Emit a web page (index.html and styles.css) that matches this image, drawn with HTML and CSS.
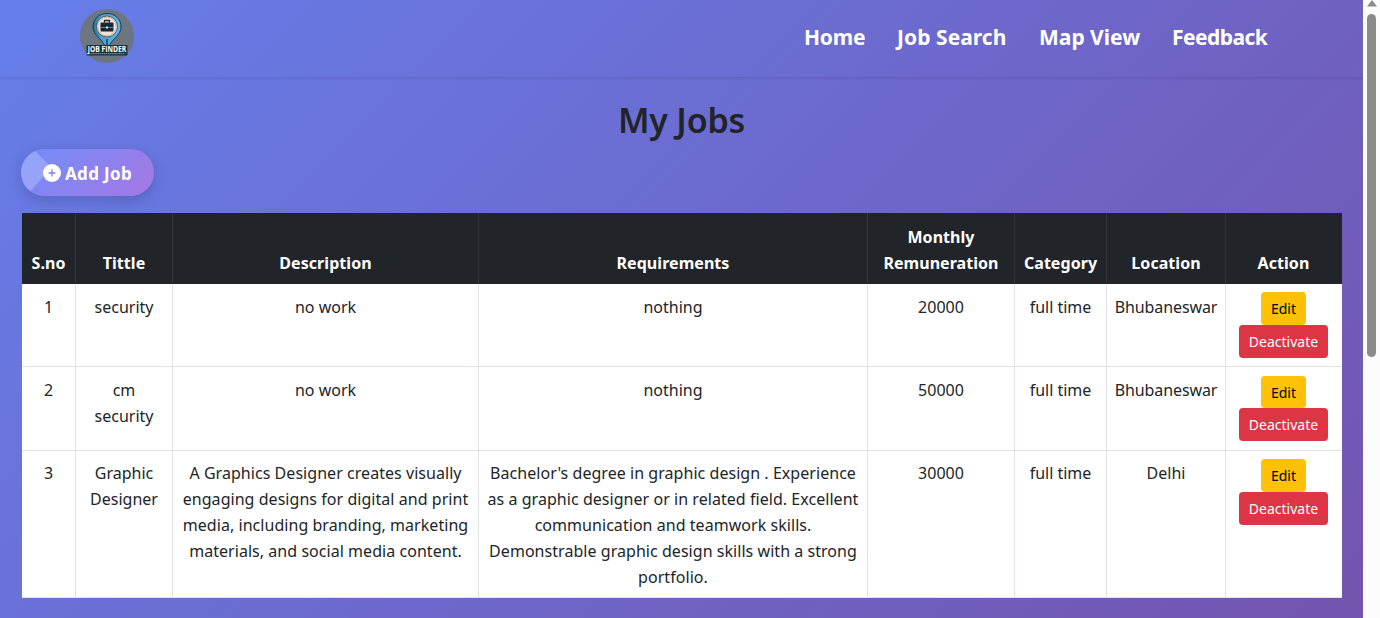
FILE: index.html
```html
<!DOCTYPE html>
<html lang="en">
<head>
<meta charset="utf-8">
<title>My Jobs</title>
<link rel="stylesheet" href="styles.css">
</head>
<body>
<div class="page">
  <header class="navbar">
    <svg class="logo" width="56" height="56" viewBox="0 0 56 56">
      <defs>
        <linearGradient id="pin" x1="0" x2="1"><stop offset="0" stop-color="#2f6f9a"/><stop offset=".3" stop-color="#4d9fce"/><stop offset="1" stop-color="#63b8e4"/></linearGradient>
      </defs>
      <circle cx="28" cy="28" r="27" fill="#6b7680"/>
      <path d="M28 5.500c-8.500 0-14 6-14 13.500 0 8 8.500 11.500 12 19h4c3.500-7.500 12-11 12-19C42 11.500 36.500 5.500 28 5.500z" fill="url(#pin)" stroke="#173b57" stroke-width="1"/>
      <circle cx="28" cy="18.500" r="10.500" fill="#efe4d8" stroke="#1f4a68" stroke-width=".8"/>
      <circle cx="28" cy="18.500" r="9.300" fill="none" stroke="#e0a486" stroke-width=".8"/>
      <path d="M25.500 14.500v-2h5v2" fill="none" stroke="#14283a" stroke-width="1.300"/>
      <rect x="21.500" y="14.500" width="13" height="9" rx="1" fill="#14283a"/>
      <path d="M21.500 19.500h13" stroke="#92a6b1" stroke-width=".7"/>
      <rect x="27" y="18.500" width="2" height="2" fill="#dce7ea"/>
      <path d="M28 31v7" stroke="#13334c" stroke-width="1.300"/>
      <circle cx="39.500" cy="31" r="1.200" fill="#9b5e58"/>
      <rect x="7.500" y="37" width="41" height="10.500" rx="1" fill="#1b3040"/>
      <text class="logo-name" x="28" y="43.800" text-anchor="middle" textLength="38.500" lengthAdjust="spacingAndGlyphs">JOB FINDER</text>
      <path d="M10 45.700h36" stroke="#8ca0ae" stroke-width="1" stroke-dasharray="1.500 .6"/>
    </svg>
    <nav class="menu">
      <a class="menu-home">Home</a>
      <a class="menu-search">Job Search</a>
      <a class="menu-map">Map View</a>
      <a class="menu-feedback">Feedback</a>
    </nav>
  </header>
  <main class="content">
    <h1 class="title">My Jobs</h1>
    <a class="add-job">
      <svg width="18" height="18" viewBox="0 0 18 18"><circle cx="9" cy="9" r="9" fill="#fff"/><path d="M9 6v6M6 9h6" stroke="#7b80ee" stroke-width="1.300" stroke-linecap="round"/></svg>
      <span>Add Job</span>
    </a>
    <table class="jobs">
      <colgroup><col class="c-no"><col class="c-title"><col class="c-desc"><col class="c-req"><col class="c-pay"><col class="c-cat"><col class="c-loc"><col class="c-act"></colgroup>
      <thead>
        <tr><th>S.no</th><th>Tittle</th><th>Description</th><th>Requirements</th><th>Monthly<br>Remuneration</th><th>Category</th><th>Location</th><th>Action</th></tr>
      </thead>
      <tbody>
        <tr class="row-short"><td>1</td><td>security</td><td>no work</td><td>nothing</td><td>20000</td><td>full time</td><td class="place">Bhubaneswar</td>
          <td class="actions"><div class="stack"><a class="btn edit">Edit</a><a class="btn deactivate">Deactivate</a></div></td></tr>
        <tr class="row-mid"><td>2</td><td>cm<br>security</td><td>no work</td><td>nothing</td><td>50000</td><td>full time</td><td class="place">Bhubaneswar</td>
          <td class="actions"><div class="stack"><a class="btn edit">Edit</a><a class="btn deactivate">Deactivate</a></div></td></tr>
        <tr class="row-tall"><td>3</td><td>Graphic<br>Designer</td>
          <td class="prose">A Graphics Designer creates visually<br>engaging designs for digital and print<br>media, including branding, marketing<br>materials, and social media content.</td>
          <td class="prose">Bachelor's degree in graphic design . Experience<br>as a graphic designer or in related field. Excellent<br>communication and teamwork skills.<br>Demonstrable graphic design skills with a strong<br>portfolio.</td>
          <td>30000</td><td>full time</td><td>Delhi</td>
          <td class="actions"><div class="stack"><a class="btn edit">Edit</a><a class="btn deactivate">Deactivate</a></div></td></tr>
      </tbody>
    </table>
  </main>
</div>
<div class="scrollbar">
  <svg width="12" height="8" viewBox="0 0 12 8"><path d="M6 0 11 6.500H1z" fill="#8b8b8b"/></svg>
  <div class="thumb"></div>
</div>
</body>
</html>
```
FILE: styles.css
```css
* { box-sizing: border-box; }
body {
  margin: 0;
  height: 618px;
  display: flex;
  overflow: hidden;
  font-family: "Noto Sans", "Open Sans", sans-serif;
  font-size: 16px;
  line-height: 26px;
  color: #212529;
}
.page {
  width: 1363px;
  height: 618px;
  background: linear-gradient(135deg, #667eea 0%, #764ba2 100%) 0 0 / 100% 1040px no-repeat;
}
.navbar {
  height: 77px;
  padding: 8px 95px 0 79px;
  display: flex;
  justify-content: space-between;
  align-items: flex-start;
  box-shadow: 0 1px 3px rgba(0, 0, 0, .12);
}
.logo { display: block; }
.logo-name { font: bold 8px "Open Sans", sans-serif; fill: #fff; }
.menu {
  display: flex;
  gap: 32px;
  padding-top: 14px;
  font-size: 21px;
  line-height: 30px;
  font-weight: 700;
  color: #fff;
  white-space: nowrap;
}
.menu-home { width: 61px; letter-spacing: -.2px; }
.menu-search { width: 110px; letter-spacing: .05px; }
.menu-map { width: 101px; }
.menu-feedback { width: 96px; letter-spacing: -.55px; }
.content { padding: 21px 21px 0 21px; }
.title {
  margin: 0;
  height: 51px;
  line-height: 44px;
  font-size: 34px;
  font-weight: 600;
  letter-spacing: -.2px;
  text-align: center;
}
.add-job {
  display: flex;
  align-items: center;
  justify-content: center;
  gap: 4px;
  width: 133px;
  height: 47px;
  border-radius: 24px;
  color: #fff;
  font-size: 17px;
  letter-spacing: .35px;
  line-height: 28px;
  font-weight: 700;
  white-space: nowrap;
  background: linear-gradient(135deg, #6e8efb, #a777e3);
  box-shadow: 0 4px 14px rgba(0, 0, 0, .17);
  position: relative;
  overflow: hidden;
}
.add-job::before {
  content: "";
  position: absolute;
  left: 0;
  top: 0;
  width: 28px;
  height: 47px;
  background: rgba(255, 255, 255, .22);
  clip-path: polygon(0 0, 12px 0, 28px 16px, 28px 21px, 7px 45px, 0 47px);
}
.add-job svg, .add-job span { position: relative; }
.add-job span { top: 1px; }
.jobs {
  margin: 17px 0 0 1px;
  width: 1320px;
  table-layout: fixed;
  border-collapse: separate;
  border-spacing: 0;
  background: #fff;
  text-align: center;
  white-space: nowrap;
}
.c-no { width: 53px; }
.c-title { width: 97px; }
.c-desc { width: 306px; }
.c-req { width: 389px; }
.c-pay { width: 147px; }
.c-cat { width: 92px; }
.c-loc { width: 119px; }
.c-act { width: 117px; }
.jobs th {
  height: 71px;
  padding: 0 0 8px;
  vertical-align: bottom;
  background: #212529;
  color: #fff;
  border-left: 1px solid #32373b;
  letter-spacing: .05px;
}
.jobs td {
  padding: 10px 0 0;
  vertical-align: top;
  border-left: 1px solid #dee2e6;
  border-bottom: 1px solid #dee2e6;
}
.jobs th:first-child, .jobs td:first-child { border-left: 0; }
.jobs th:last-child, .jobs td:last-child { padding-right: 1px; }
.jobs td.place { letter-spacing: -.1px; }
.jobs td.prose { letter-spacing: .045px; }
.row-short td { height: 83px; }
.row-mid td { height: 84px; }
.row-tall td { height: 147px; }
.jobs .row-tall td { padding-top: 9px; }
.jobs .row-short .actions, .jobs .row-tall .actions { padding-top: 8px; }
.jobs .row-mid .actions { padding-top: 8.5px; }
.stack { display: flex; flex-direction: column; align-items: center; }
.btn {
  height: 33px;
  line-height: 34px;
  border-radius: 4px;
  font-size: 14px;
}
.edit { width: 45px; background: #ffc107; color: #000; height: 32.5px; }
.deactivate { width: 89px; background: #dc3545; color: #fff; }
.scrollbar {
  width: 17px;
  height: 618px;
  background: #fcfcfc;
  display: flex;
  flex-direction: column;
  align-items: center;
}
.scrollbar svg { display: block; }
.thumb {
  width: 9px;
  height: 343px;
  margin-top: 6px;
  border-radius: 5px;
  background: #8b8b8b;
}
```
